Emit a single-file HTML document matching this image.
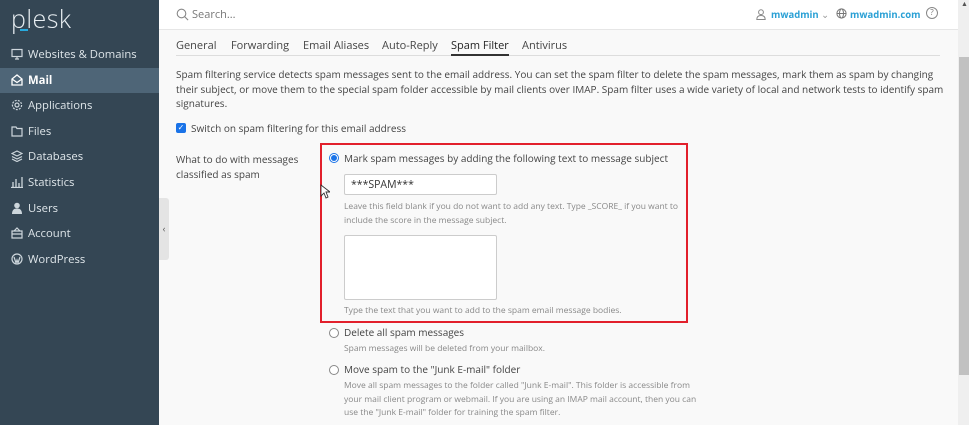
<!DOCTYPE html>
<html><head><meta charset="utf-8"><style>
*{box-sizing:border-box;margin:0;padding:0}
body{width:969px;height:425px;overflow:hidden;background:#f9f9f9;font-family:"Open Sans","Liberation Sans",sans-serif;color:#333;position:relative}
.sb{position:absolute;left:0;top:0;width:159px;height:425px;background:#344654;color:#d9e1e6}
.logo{position:absolute;left:11px;top:2px;font-size:25px;color:#e8eef2;font-weight:300;letter-spacing:0.5px}
.logo i{position:absolute;left:9px;top:27px;width:8px;height:2px;background:#28aade}
.nav{position:absolute;top:42px;left:0;width:159px}
.nav div{height:25.6px;line-height:25.6px;padding-left:28px;font-size:11.3px;position:relative;color:#dfe6ea}
.nav div.act{background:#4e6577;color:#fff;font-weight:bold}
.nav svg{position:absolute;left:11px;top:6px}
.hd{position:absolute;left:159px;top:0;width:799px;height:30px;background:#fff;border-bottom:1px solid #e6e6e6}
.sr{position:absolute;left:33px;top:7px;font-size:11px;color:#777}
.u{position:absolute;font-size:9.5px;color:#2aa0d5;font-weight:bold;top:8px}
.tabs{position:absolute;left:176px;top:38px;width:764px;height:18px;border-bottom:1px solid #ddd;font-size:11px;color:#444}
.tabs span{position:absolute;top:0}
.txt{position:absolute;font-size:10px;color:#444;line-height:14.5px}
.sm{position:absolute;font-size:8.5px;color:#888;line-height:13.5px}
.box{position:absolute;left:320px;top:143px;width:368px;height:180px;border:2px solid #e2202c}
.in{position:absolute;background:#fff;border:1px solid #ccc;border-radius:2px}
.rad{position:absolute;width:10px;height:10px;border:1px solid #888;border-radius:50%;background:#fff}
</style></head><body>
<div class="sb">
<div class="logo">plesk<i></i></div>
<div class="nav">
<div><svg width="12" height="12" viewBox="0 0 12 12" fill="none" stroke="#cdd6dc" stroke-width="1.2"><rect x="1" y="1.5" width="10" height="7"/><path d="M4 11h4M6 8.5v2.5"/></svg>Websites &amp; Domains</div>
<div class="act"><svg width="12" height="12" viewBox="0 0 12 12" fill="none" stroke="#fff" stroke-width="1.3"><path d="M1 5l5-4 5 4v6H1z M1 5l5 3.5 5-3.5"/></svg>Mail</div>
<div><svg width="12" height="12" viewBox="0 0 12 12" fill="none" stroke="#cdd6dc" stroke-width="1.2"><circle cx="6" cy="6" r="2"/><circle cx="6" cy="6" r="4.6" stroke-dasharray="2 1.2"/></svg>Applications</div>
<div><svg width="12" height="12" viewBox="0 0 12 12" fill="none" stroke="#cdd6dc" stroke-width="1.2"><path d="M1 2h4l1 1.5h5V11H1z"/></svg>Files</div>
<div><svg width="12" height="12" viewBox="0 0 12 12" fill="none" stroke="#cdd6dc" stroke-width="1.2"><path d="M1 3.5l5-2.5 5 2.5-5 2.5zM1 6.5l5 2.5 5-2.5M1 9l5 2.5L11 9"/></svg>Databases</div>
<div><svg width="12" height="12" viewBox="0 0 12 12" fill="none" stroke="#cdd6dc" stroke-width="1.3"><path d="M2 11V6M5 11V3M8 11V7M11 11V1M0 11.5h12"/></svg>Statistics</div>
<div><svg width="12" height="12" viewBox="0 0 12 12" fill="#cdd6dc"><circle cx="6" cy="3.5" r="2.8"/><path d="M1 12c0-4 2-5.5 5-5.5s5 1.5 5 5.5z"/></svg>Users</div>
<div><svg width="12" height="12" viewBox="0 0 12 12" fill="none" stroke="#cdd6dc" stroke-width="1.2"><path d="M1 4h10v7H1zM3 4l3-3 3 3M1 7h10"/></svg>Account</div>
<div><svg width="12" height="12" viewBox="0 0 12 12" fill="none" stroke="#cdd6dc" stroke-width="1.2"><circle cx="6" cy="6" r="5"/><path d="M3 4l2 6 1-3 1 3 2-6"/></svg>WordPress</div>
</div></div>
<div style="position:absolute;left:159px;top:198px;width:10px;height:62px;background:#e4e4e4;border-radius:0 3px 3px 0;font-size:9px;color:#555;line-height:62px;text-align:center">‹</div>
<div class="hd">
<svg style="position:absolute;left:17px;top:8px" width="13" height="13" viewBox="0 0 13 13" fill="none" stroke="#888" stroke-width="1.1"><circle cx="5.5" cy="5.5" r="4.3"/><path d="M8.6 8.6l3.5 3.5"/></svg>
<div class="sr">Search...</div>
<svg style="position:absolute;left:597px;top:9px" width="10" height="11" viewBox="0 0 10 11" fill="none" stroke="#888" stroke-width="1"><circle cx="5" cy="3.2" r="2.4"/><path d="M0.8 10.5c0-3 2-4 4.2-4s4.2 1 4.2 4z"/></svg>
<div class="u" style="left:612px">mwadmin <span style="color:#999;font-weight:normal">⌄</span></div>
<svg style="position:absolute;left:677px;top:8px" width="11" height="11" viewBox="0 0 11 11" fill="none" stroke="#777" stroke-width="1"><circle cx="5.5" cy="5.5" r="4.6"/><ellipse cx="5.5" cy="5.5" rx="2" ry="4.6"/><path d="M1 5.5h9"/></svg>
<div class="u" style="left:691px">mwadmin.com</div>
<div style="position:absolute;left:767px;top:7px;width:12px;height:12px;border:1px solid #888;border-radius:50%;font-size:8px;text-align:center;line-height:10px;color:#777">?</div>
</div>
<div style="position:absolute;left:958px;top:0;width:11px;height:425px;background:#efefef"></div>
<div style="position:absolute;left:959px;top:57px;width:10px;height:318px;background:#c1c1c1"></div>
<div style="position:absolute;left:961px;top:0;font-size:7px;color:#555">▲</div>
<div class="tabs">
<span style="left:0">General</span><span style="left:55px">Forwarding</span><span style="left:127px">Email Aliases</span><span style="left:206px">Auto-Reply</span><span style="left:275px;color:#222;border-bottom:2px solid #333;height:18px">Spam Filter</span><span style="left:346px">Antivirus</span>
</div>
<div class="txt" style="left:176px;top:67px;width:775px">Spam filtering service detects spam messages sent to the email address. You can set the spam filter to delete the spam messages, mark them as spam by changing their subject, or move them to the special spam folder accessible by mail clients over IMAP. Spam filter uses a wide variety of local and network tests to identify spam signatures.</div>
<div style="position:absolute;left:176px;top:123px;width:10px;height:10px;background:#1a73e8;border-radius:2px;color:#fff;font-size:8px;line-height:10px;text-align:center">✓</div>
<div class="txt" style="left:191px;top:121px">Switch on spam filtering for this email address</div>
<div class="txt" style="left:176px;top:152px;width:140px">What to do with messages classified as spam</div>
<div class="box"></div>
<div class="rad" style="left:329px;top:153px;border-color:#1a73e8"><div style="width:6px;height:6px;margin:1px;border-radius:50%;background:#1a73e8"></div></div>
<div class="txt" style="left:344px;top:151px">Mark spam messages by adding the following text to message subject</div>
<div class="in" style="left:344px;top:174px;width:153px;height:21px"><span style="position:absolute;left:6px;top:3px;font-size:10.5px;color:#333">***SPAM***</span></div>
<svg style="position:absolute;left:320px;top:184px" width="10" height="15" viewBox="0 0 10 15" fill="#fff" stroke="#333" stroke-width="0.9"><path d="M1 1v11l3-3 2 5 2-1-2-5h4z"/></svg>
<div class="sm" style="left:344px;top:200px;width:345px">Leave this field blank if you do not want to add any text. Type _SCORE_ if you want to include the score in the message subject.</div>
<div class="in" style="left:344px;top:235px;width:153px;height:65px"></div>
<div class="sm" style="left:344px;top:304px">Type the text that you want to add to the spam email message bodies.</div>
<div class="rad" style="left:329px;top:328px"></div>
<div class="txt" style="left:344px;top:325px">Delete all spam messages</div>
<div class="sm" style="left:344px;top:342px">Spam messages will be deleted from your mailbox.</div>
<div class="rad" style="left:329px;top:365px"></div>
<div class="txt" style="left:344px;top:362px">Move spam to the "Junk E-mail" folder</div>
<div class="sm" style="left:344px;top:379px;width:365px">Move all spam messages to the folder called "Junk E-mail". This folder is accessible from your mail client program or webmail. If you are using an IMAP mail account, then you can use the "Junk E-mail" folder for training the spam filter.</div>
</body></html>
